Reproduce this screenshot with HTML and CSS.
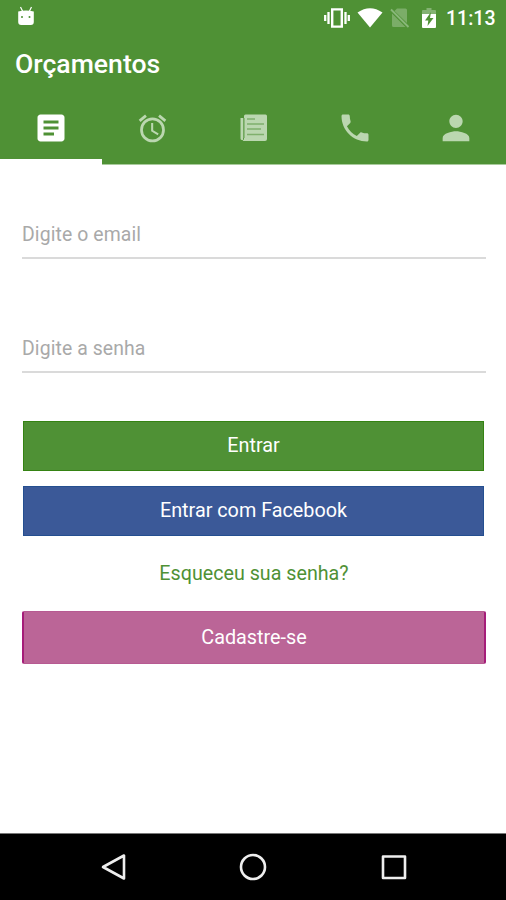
FILE: index.html
```html
<!DOCTYPE html>
<html lang="pt-BR">
<head>
<meta charset="utf-8">
<title>Orçamentos</title>
<link rel="stylesheet" href="styles.css">
</head>
<body>
<header class="header">
  <div class="status">
    <svg class="droid" viewBox="0 0 18 20"><path d="M3.500 1 6 6M14.500 1 12 6" stroke="#fff" stroke-width="1.200"/><path fill="#fff" d="M1.200 5.500q7.800-2 15.600 0v10.500q0 3-3 3h-9.600q-3 0-3-3z"/><circle cx="5" cy="11" r="1" fill="#4f9135"/><circle cx="12.500" cy="11" r="1" fill="#4f9135"/></svg>
    <div class="indicators">
      <svg class="vibrate" viewBox="0 0 26 20"><path fill="none" stroke="#fff" stroke-width="2.400" d="M8.200 1.400h9.600v17.200H8.200z"/><path fill="none" stroke="#fff" stroke-width="2.300" d="M4.500 4v12M21.500 4v12M1.200 7v6M24.800 7v6"/></svg>
      <svg class="wifi" viewBox="0 0 26 20"><path fill="#fff" d="M.5 4.500Q13-4 25.500 4.500L13 19.500z"/></svg>
      <svg class="sim" viewBox="0 0 20 20"><path fill="#7bad68" d="M7 .5h8.500q1.500 0 1.500 1.500v13L4.500 3zM2 5.500 15.500 19H3.500Q2 19 2 17.500z"/><path stroke="#8ab87a" stroke-width="1.800" d="m1 1.500 17.500 17.500"/></svg>
      <svg class="battery" viewBox="0 0 14 20"><path fill="#84b273" d="M4.500 0h5v2H13q1 0 1 1v3H0V3q0-1 1-1h3.500z"/><path fill="#fff" d="M0 6h14v13q0 1-1 1H1q-1 0-1-1z"/><path fill="#4f9135" d="M9 4 3 12.500h3.300L5.500 18l6-8H8z"/></svg>
      <span class="clock">11:13</span>
    </div>
  </div>
  <h1 class="title">Orçamentos</h1>
  <nav class="tabs">
    <a class="tab active"><svg viewBox="0 0 24 24"><path d="M19 3H5c-1.100 0-2 .9-2 2v14c0 1.100.9 2 2 2h14c1.100 0 2-.9 2-2V5c0-1.100-.9-2-2-2zm-5 14H7v-2h7zm3-4H7v-2h10zm0-4H7V7h10z"/></svg></a>
    <a class="tab"><svg class="alarm" viewBox="0 0 24 24"><path d="m22 5.720-4.600-3.860-1.290 1.530 4.600 3.860zM7.880 3.390 6.600 1.860 2 5.710l1.290 1.530zM12.500 8H11v6l4.750 2.850.75-1.230-4-2.370zM12 4a9 9 0 1 0 0 18 9 9 0 0 0 0-18zm0 16a7 7 0 1 1 0-14 7 7 0 0 1 0 14z"/></svg></a>
    <a class="tab"><svg viewBox="0 0 36 36"><path d="M4.500 8h2.500V30H6q-1.500 0-1.500-1.500zM9.500 4.500h20q1.500 0 1.500 1.500v23q0 2-2 2H6.500q1.500-1 1.500-3V6q0-1.500 1.500-1.500z"/><path class="lines" d="M11 9h8M11 14h17M11 19h14M11 24.500h17M8 8v20"/></svg></a>
    <a class="tab"><svg viewBox="0 0 24 24"><path d="M6.620 10.790c1.440 2.830 3.760 5.140 6.590 6.590l2.200-2.200c.27-.27.67-.36 1.020-.24 1.120.37 2.330.57 3.570.57.550 0 1 .45 1 1V20c0 .55-.45 1-1 1C10.610 21 3 13.390 3 4c0-.55.45-1 1-1h3.500c.55 0 1 .45 1 1 0 1.250.2 2.450.57 3.570.11.350.03.740-.25 1.020z"/></svg></a>
    <a class="tab"><svg class="person" viewBox="0 0 24 24"><path d="M12 12c2.210 0 4-1.790 4-4s-1.790-4-4-4-4 1.790-4 4 1.790 4 4 4zm0 2c-2.670 0-8 1.340-8 4v2h16v-2c0-2.660-5.330-4-8-4z"/></svg></a>
  </nav>
</header>
<main class="form">
  <input class="field" type="text" placeholder="Digite o email">
  <input class="field" type="password" placeholder="Digite a senha">
  <button class="btn enter">Entrar</button>
  <button class="btn facebook">Entrar com Facebook</button>
  <a class="forgot">Esqueceu sua senha?</a>
  <button class="btn register">Cadastre-se</button>
</main>
<footer class="navbar">
  <svg viewBox="0 0 30 30"><path d="M4 15 25 3.500v23z"/></svg>
  <svg viewBox="0 0 30 30"><circle cx="15" cy="15" r="12"/></svg>
  <svg viewBox="0 0 30 30"><path d="M4 4.500h22v21.500H4z"/></svg>
</footer>
</body>
</html>
```
FILE: styles.css
```css
* { box-sizing: border-box; }
body {
  margin: 0;
  height: 900px;
  display: flex;
  flex-direction: column;
  overflow: hidden;
  background: #fff;
  font-family: Roboto, sans-serif;
}
svg { display: block; flex: none; }
.header {
  height: 165px;
  background: #4f9135;
  color: #fff;
  display: flex;
  flex-direction: column;
  border-bottom: 1px solid #a9cb9c;
}
.status {
  height: 35px;
  padding: 0 11px 0 17px;
  display: flex;
  justify-content: space-between;
}
.droid { width: 18px; height: 20px; margin-top: 6px; }
.indicators { display: flex; align-items: center; }
.vibrate { width: 26px; height: 20px; margin-right: 7px; }
.wifi { width: 26px; height: 20px; margin-right: 7px; }
.sim { width: 20px; height: 20px; margin-right: 12px; }
.battery { width: 14px; height: 20px; margin-right: 10px; }
.clock { width: 49px; font-size: 19.500px; font-weight: 500; line-height: 37px; padding-top: 1px; white-space: nowrap; }
.title {
  margin: 0;
  padding-left: 15px;
  height: 58px;
  line-height: 58px;
  font-size: 26.600px;
  font-weight: 500;
}
.tabs { flex: 1; display: grid; grid-template-columns: 102px repeat(4, 1fr); }
.tab {
  display: flex;
  justify-content: center;
  padding-top: 17px;
  fill: #bbd7b0;
}
.tab svg { width: 36px; height: 36px; }
.tab .alarm { width: 33px; height: 33px; margin-top: 2px; }
.tab .person { width: 40px; height: 40px; margin-top: -2px; }
.active { fill: #fff; border-bottom: 6px solid #fff; margin-bottom: -1px; }
.lines { fill: none; stroke: #7fb06c; stroke-width: 1.500; }
.form {
  flex: 1;
  padding: 46px 20px 0 22px;
  display: flex;
  flex-direction: column;
}
.field {
  height: 48px;
  margin-bottom: 66px;
  padding: 0;
  border: 0;
  border-bottom: 2px solid #dadada;
  background: none;
  font: 19.400px Roboto, sans-serif;
  letter-spacing: .1px;
}
.field + .field { margin-bottom: 48px; }
.field::placeholder { color: #a9a9a9; opacity: 1; }
.btn {
  height: 50px;
  margin: 0 2px 0 1px;
  padding: 0 0 2px;
  border: 0;
  color: #fff;
  font: 19.800px Roboto, sans-serif;
}
.enter { background: #4f9135; border: 1px solid #358313; }
.facebook { background: #3b5998; border: 1px solid #244f90; margin-top: 15px; }
.forgot {
  height: 75px;
  line-height: 75px;
  text-align: center;
  font-size: 19.700px;
  color: #4f9135;
}
.register {
  height: 53px;
  margin: 0;
  padding: 0;
  background: #bb6597;
  border: solid #b75a92;
  border-width: 1px 2px;
  border-left-color: #a51d79;
  border-right-color: #a51d79;
  border-radius: 2px;
}
.navbar {
  height: 67px;
  background: #000;
  border-top: 1px solid #777;
  display: flex;
  justify-content: center;
  align-items: center;
  gap: 111px;
}
.navbar svg {
  width: 30px;
  height: 30px;
  fill: none;
  stroke: #eee;
  stroke-width: 2.600;
  stroke-linejoin: round;
}
.navbar svg:first-child { position: relative; left: 2px; }
```
